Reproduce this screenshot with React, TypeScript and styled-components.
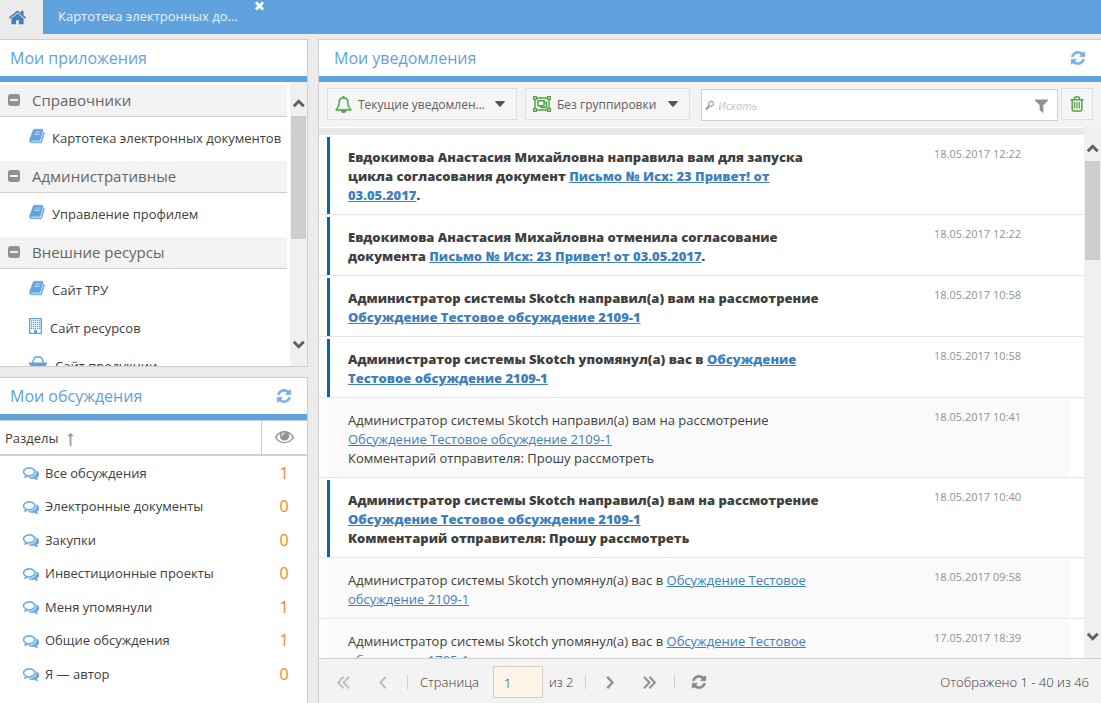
import React from "react";
import styled, { createGlobalStyle } from "styled-components";

const BLUE = "#5fa2dd";
const LINE = "#cfcfcf";
const GREEN = "#4fa344";

const GlobalStyle = createGlobalStyle`
  *, *::before, *::after { box-sizing: border-box; }
  body {
    margin: 0;
    background: #ebebeb;
    color: #404040;
    font: 13px/19px "Open Sans", "Noto Sans", sans-serif;
  }
  button, input { font: inherit; color: inherit; margin: 0; }
  button { background: none; border: 0; padding: 0; cursor: pointer; }
  svg { display: block; flex: none; }
`;

/* ---------- icons ---------- */

const PATHS = {
  home: "M1472 992v480q0 26-19 45t-45 19h-384v-384h-256v384h-384q-26 0-45-19t-19-45v-480q0-1 .5-3t.5-3l575-474 575 474q1 2 1 6zm223-69l-62 74q-8 9-21 11h-3q-13 0-21-7l-692-577-692 577q-12 8-24 7-13-2-21-11l-62-74q-8-10-7-23.5t11-21.5l719-599q32-26 76-26t76 26l244 204v-195q0-14 9-23t23-9h192q14 0 23 9t9 23v408l219 182q10 8 11 21.5t-7 23.5z",
  refresh:
    "M1639 1056q0 5-1 7-64 268-268 434.5t-478 166.5q-146 0-282.5-55t-243.5-157l-129 129q-19 19-45 19t-45-19-19-45v-448q0-26 19-45t45-19h448q26 0 45 19t19 45-19 45l-137 137q71 66 161 102t187 36q134 0 250-65t186-179q11-17 53-117 8-23 30-23h192q13 0 22.5 9.5t9.5 22.5zm25-800v448q0 26-19 45t-45 19h-448q-26 0-45-19t-19-45 19-45l138-138q-148-137-349-137-134 0-250 65t-186 179q-11 17-53 117-8 23-30 23h-199q-13 0-22.5-9.5t-9.5-22.5v-7q65-268 270-434.5t480-166.5q146 0 284 55.5t245 156.5l130-129q19-19 45-19t45 19 19 45z",
  eye: "M1664 960q-152-236-381-353 61 104 61 225 0 185-131.5 316.5t-316.5 131.5-316.5-131.5-131.5-316.5q0-121 61-225-229 117-381 353 133 205 333.5 326.5t434.5 121.5 434.5-121.5 333.5-326.5zm-720-384q0-20-14-34t-34-14q-125 0-214.5 89.5t-89.5 214.5q0 20 14 34t34 14 34-14 14-34q0-86 61-147t147-61q20 0 34-14t14-34zm848 384q0 34-20 69-140 230-376.5 368.5t-499.5 138.5-499.5-139-376.5-368q-20-35-20-69t20-69q140-229 376.5-368t499.5-139 499.5 139 376.5 368q20 35 20 69z",
  minus:
    "M1408 960v-128q0-26-19-45t-45-19h-896q-26 0-45 19t-19 45v128q0 26 19 45t45 19h896q26 0 45-19t19-45zm256-544v960q0 119-84.5 203.5t-203.5 84.5h-960q-119 0-203.5-84.5t-84.5-203.5v-960q0-119 84.5-203.5t203.5-84.5h960q119 0 203.5 84.5t84.5 203.5z",
  book: "M1703 478q40 57 18 129l-275 906q-19 64-76.5 107.5t-122.5 43.5h-923q-77 0-148.5-53.5t-99.5-131.5q-24-67-2-127 0-4 3-27t4-37q1-8-3-21.5t-3-19.5q2-11 8-21t16.5-23.5 16.5-23.5q23-38 45-91.5t30-91.5q3-10 .5-30t-.5-28q3-11 17-28t17-23q21-36 42-92t25-90q1-9-2.5-32t.5-28q4-13 22-30.5t22-22.5q19-26 42.5-84.5t27.5-96.5q1-8-3-25.5t-2-26.5q2-8 9-18t18-23 17-21q8-12 16.5-30.5t15-35 16-36 19.5-32 26.5-23.5 36-11.5 47.5 5.5l-1 3q38-9 51-9h761q74 0 114 56t18 130l-274 906q-36 119-71.5 153.5t-128.5 34.5h-869q-27 0-38 15-11 16-1 43 24 70 144 70h923q29 0 56-15.5t35-41.5l300-987q7-22 5-57 38 15 59 43zm-1064 2q-4 13 2 22.5t20 9.5h608q13 0 25.5-9.5t16.5-22.5l21-64q4-13-2-22.5t-20-9.5h-608q-13 0-25.5 9.5t-16.5 22.5zm-83 256q-4 13 2 22.5t20 9.5h608q13 0 25.5-9.5t16.5-22.5l21-64q4-13-2-22.5t-20-9.5h-608q-13 0-25.5 9.5t-16.5 22.5z",
  times:
    "M1490 1322q0 40-28 68l-136 136q-28 28-68 28t-68-28l-294-294-294 294q-28 28-68 28t-68-28l-136-136q-28-28-28-68t28-68l294-294-294-294q-28-28-28-68t28-68l136-136q28-28 68-28t68 28l294 294 294-294q28-28 68-28t68 28l136 136q28 28 28 68t-28 68l-294 294 294 294q28 28 28 68z",
  comments:
    "M704 384q-153 0-286 52t-211.5 141-78.5 191q0 82 53 158t149 132l97 56-35 84q34-20 62-39l44-31 53 10q78 14 153 14 153 0 286-52t211.5-141 78.5-191-78.5-191-211.5-141-286-52zm0-128q191 0 353.5 68.5t256.5 186.5 94 257-94 257-256.5 186.5-353.5 68.5q-86 0-176-16-124 88-278 128-36 9-86 16h-3q-11 0-20.5-8t-11.5-21q-1-3-1-6.5t.5-6.5 2-6l2.5-5 3.5-5.5 4-5 4.5-5 4-4.5q5-6 23-25t26-29.5 22.5-29 25-38.5 20.5-44q-124-72-195-177t-71-224q0-139 94-257t256.5-186.5 353.5-68.5zm822 1169q10 24 20.5 44t25 38.5 22.5 29 26 29.5 23 25q1 1 4 4.5t4.5 5 4 5 3.5 5.5l2.5 5 2 6 .5 6.5-1 6.5q-3 14-13 22t-22 7q-50-7-86-16-154-40-278-128-90 16-176 16-271 0-472-132 58 4 88 4 161 0 309-45t264-129q125-92 192-212t67-254q0-77-23-152 129 71 204 178t75 230q0 120-71 224.5t-195 176.5z",
  filter:
    "M1595 295q17 41-14 70l-493 493v742q0 42-39 59-13 5-25 5-27 0-45-19l-256-256q-19-19-19-45v-486l-493-493q-31-29-14-70 17-39 59-39h1280q42 0 59 39z",
  bell: "M912 1696q0-16-16-16-59 0-101.5-42.5t-42.5-101.5q0-16-16-16t-16 16q0 73 51.5 124.5t124.5 51.5q16 0 16-16zm-666-288h1300q-266-300-266-832 0-51-24-105t-69-103-121.5-80.5-169.5-31.5-169.5 31.5-121.5 80.5-69 103-24 105q0 532-266 832zm1482 0q0 52-38 90t-90 38h-448q0 106-75 181t-181 75-181-75-75-181h-448q-52 0-90-38t-38-90q50-42 91-88t85-119.5 74.5-158.5 50-206 19.5-260q0-152 117-282.5t307-158.5q-8-19-8-39 0-40 28-68t68-28 68 28 28 68q0 20-8 39 190 28 307 158.5t117 282.5q0 139 19.5 260t50 206 74.5 158.5 85 119.5 91 88z",
};

interface IconProps {
  name: keyof typeof PATHS;
  size: number;
  color: string;
  heavy?: boolean;
}

const Icon = ({ name, size, color, heavy }: IconProps) => (
  <svg width={size} height={size} viewBox="0 0 1792 1792" fill={color} aria-hidden="true">
    <path d={PATHS[name]} stroke={heavy ? color : "none"} strokeWidth="50" />
  </svg>
);

const BuildingIcon = () => (
  <svg width="14" height="18" viewBox="0 0 14 18" fill={BLUE} aria-hidden="true">
    <path d="M0 1h13v16H0zM1.300 2.300v13.400H5V13h3v2.700h3.700V2.300z" fillRule="evenodd" />
    {[3, 5, 7, 9, 11].map((y) =>
      [2, 4, 6, 8, 10].map((x) => <rect key={`${x}-${y}`} x={x} y={y} width="1.300" height="1.300" />)
    )}
    <rect x="5" y="14" width="3" height="3" />
  </svg>
);

const BasketIcon = () => (
  <svg width="19" height="18" viewBox="0 0 19 18" aria-hidden="true">
    <path d="M3.500 8L5.200 3.200Q5.600 2 6.800 2h4.400q1.200 0 1.600 1.200L14.500 8" fill="none" stroke={BLUE} strokeWidth="1.400" />
    <path d="M0 7.500h18v2h-1L16 16H2L1 9.500H0z" fill={BLUE} />
    <path d="M5.500 11v3M9 11v3M12.500 11v3" stroke="#fff" />
  </svg>
);

const GroupIcon = () => (
  <svg width="18" height="16" viewBox="0 0 18 16" fill="none" stroke={GREEN} aria-hidden="true">
    <path d="M2 2h14v12H2z" strokeWidth="1.400" fill="#e9f4e6" />
    <path d="M5 4.700h6v5H5z" strokeWidth="1.500" fill="#fff" />
    <path d="M11 6.500h2.500v5H8V9.700" strokeWidth="1.500" />
    <path
      d="M.6.600h2.800v2.800H.6zM14.600.600h2.800v2.800h-2.800zM.6 12.600h2.800v2.800H.6zM14.600 12.600h2.800v2.800h-2.800z"
      strokeWidth="1.200"
      fill="#dcefd8"
    />
  </svg>
);

const TrashIcon = () => (
  <svg width="14" height="16" viewBox="0 0 14 16" fill="none" stroke={GREEN} aria-hidden="true">
    <path d="M.5 3.700h13M4.500 3.500V2q0-1 1-1h3q1 0 1 1v1.500" strokeWidth="1.500" />
    <path d="M2.200 4v9.500q0 1.500 1.300 1.500h7q1.300 0 1.300-1.500V4" strokeWidth="1.500" />
    <path d="M4.700 6v6.500M7 6v6.500M9.300 6v6.500" strokeWidth="1.200" />
  </svg>
);

const SearchIcon = () => (
  <svg width="10" height="11" viewBox="0 0 10 11" aria-hidden="true">
    <path d="M4.500 6L.8 9.400" stroke="#888" strokeWidth="1.800" />
    <circle cx="6" cy="3.800" r="2.700" fill="#dfeaf4" stroke="#9a9fa5" />
  </svg>
);

const CaretIcon = () => (
  <svg width="10" height="6" viewBox="0 0 10 6" fill="#555" aria-hidden="true">
    <path d="M.2 0h9.600Q10 .8 9.400 1.300L5.700 5.500Q5 6.100 4.300 5.500L.6 1.300Q0 .8.2 0z" />
  </svg>
);

const SortIcon = () => (
  <svg width="7" height="14" viewBox="0 0 7 14" fill="#999" stroke="#999" aria-hidden="true">
    <path d="M3.500 14V3" strokeWidth="1.800" />
    <path d="M.8 4L3.500 1l2.700 3z" strokeWidth=".6" />
  </svg>
);

const ScrollArrow = ({ up }: { up?: boolean }) => (
  <svg width="12" height="9" viewBox="0 0 12 9" fill="none" stroke="#606060" strokeWidth="3" aria-hidden="true">
    <path d={up ? "M.7 7.300L5.700 2.300l5 5" : "M.7 1.700L5.700 6.700l5-5"} />
  </svg>
);

const PageArrow = ({ right, twice }: { right?: boolean; twice?: boolean }) => (
  <svg
    width={twice ? 13 : 8}
    height="13"
    viewBox={twice ? "0 0 13 13" : "0 0 8 13"}
    fill="none"
    stroke={right ? "#929292" : "#c0c0c0"}
    strokeWidth={right && !twice ? "2.500" : "2"}
    aria-hidden="true"
  >
    {right ? (
      <path d={twice ? "M1 .8l5.400 5.700L1 12.200M6.400.8l5.400 5.700-5.400 5.700" : "M1.200.8l5.400 5.700-5.400 5.700"} />
    ) : (
      <path d={twice ? "M12 .8L6.600 6.500l5.400 5.700M6.600.8L1.200 6.500l5.400 5.700" : "M6.800.8L1.400 6.500l5.400 5.700"} />
    )}
  </svg>
);

/* ---------- frame ---------- */

const Page = styled.div`
  display: flex;
  flex-direction: column;
  height: 100vh;
`;

const TabBar = styled.nav`
  display: flex;
  height: 34px;
  flex: none;
  background: ${BLUE};
`;

const HomeButton = styled.button`
  width: 43px;
  padding-left: 8px;
  background: #ebebeb;
`;

const Tab = styled.div`
  display: flex;
  align-items: flex-start;
  gap: 15px;
  padding: 0 15px;
  color: #e9f2fb;
`;

const TabLabel = styled.button`
  height: 33px;
`;

const CloseButton = styled.button`
  margin-top: -1px;
`;

const Workspace = styled.main`
  display: flex;
  flex: 1;
  min-height: 0;
  gap: 10px;
  padding-top: 5px;
`;

const Sidebar = styled.div`
  display: flex;
  flex-direction: column;
  gap: 10px;
  width: 308px;
  flex: none;
`;

const Panel = styled.section<{ $side: "left" | "right"; $grow?: boolean; $closed?: boolean }>`
  display: flex;
  flex-direction: column;
  min-width: 0;
  min-height: 0;
  flex: ${(p) => (p.$grow ? "1" : "none")};
  background: #fff;
  border-top: 1px solid ${LINE};
  border-${(p) => (p.$side === "left" ? "right" : "left")}: 1px solid ${LINE};
  border-bottom: ${(p) => (p.$closed ? `1px solid ${LINE}` : "0")};
`;

const PanelHeader = styled.header<{ $indent: number }>`
  display: flex;
  align-items: center;
  justify-content: space-between;
  flex: none;
  height: 42px;
  padding: 0 15px 0 ${(p) => p.$indent}px;
  border-bottom: 6px solid ${BLUE};
`;

const PanelTitle = styled.h2`
  margin: 0;
  font-size: 16px;
  font-weight: 400;
  line-height: 22px;
  color: ${BLUE};
`;

const ScrollArea = styled.div`
  display: flex;
  flex: 1;
  min-height: 0;
`;

const ScrollTrack = styled.div`
  display: flex;
  flex-direction: column;
  align-items: center;
  width: 17px;
  flex: none;
  padding: 17px 0;
  background: #f0f0f0;
`;

const ScrollThumb = styled.div<{ $length: number }>`
  width: 15px;
  height: ${(p) => p.$length}px;
  margin: 8px 0 auto;
  background: #cdcdcd;
`;

const Scrollbar = ({ length }: { length: number }) => (
  <ScrollTrack aria-hidden="true">
    <ScrollArrow up />
    <ScrollThumb $length={length} />
    <ScrollArrow />
  </ScrollTrack>
);

/* ---------- applications ---------- */

const AppList = styled.div`
  flex: 1;
  min-width: 0;
  overflow: hidden;
  padding: 3px 3px 0 0;
`;

const AppGroup = styled.div`
  margin-bottom: 6px;
`;

const GroupToggle = styled.button`
  display: flex;
  align-items: center;
  gap: 11px;
  width: 100%;
  height: 32px;
  padding: 0 0 2px 7px;
  background: #f3f3f3;
  border-bottom: 1px solid ${LINE};
  font-size: 15px;
  line-height: 20px;
  color: #666;
`;

const AppLink = styled.a`
  display: flex;
  align-items: center;
  gap: 7px;
  height: 38px;
  padding: 4px 0 0 29px;
  white-space: nowrap;
  color: #404040;
  text-decoration: none;

  svg {
    margin-bottom: 4px;
  }
`;

const appGroups = [
  { title: "Справочники", items: [{ label: "Картотека электронных документов", icon: "book" }] },
  { title: "Административные", items: [{ label: "Управление профилем", icon: "book" }] },
  {
    title: "Внешние ресурсы",
    items: [
      { label: "Сайт ТРУ", icon: "book" },
      { label: "Сайт ресурсов", icon: "building" },
      { label: "Сайт продукции", icon: "basket" },
    ],
  },
];

const AppIcon = ({ icon }: { icon: string }) => {
  if (icon === "building") return <BuildingIcon />;
  if (icon === "basket") return <BasketIcon />;
  return <Icon name="book" size={16} color={BLUE} heavy />;
};

/* ---------- discussions ---------- */

const Discussions = styled.table`
  width: 100%;
  margin-bottom: 12px;
  border-collapse: separate;
  border-spacing: 0;

  th {
    height: 36px;
    padding: 2px 0 0 5px;
    border-top: 1px solid ${LINE};
    border-bottom: 2px solid ${LINE};
    font-weight: 400;
    text-align: left;
  }
  th + th {
    width: 46px;
    padding: 0 0 2px 13px;
    border-left: 1px solid ${LINE};
  }
  td {
    height: 34px;
    padding: 0 0 0 23px;
  }
  tr:nth-child(even) td {
    height: 33px;
  }
`;

const SortButton = styled.button`
  display: flex;
  align-items: center;
  gap: 8px;
`;

const Topic = styled.a`
  display: flex;
  align-items: center;
  gap: 6px;
  color: #404040;
  text-decoration: none;
`;

const Count = styled.td`
  && {
    padding: 0;
    text-align: center;
    font-size: 16px;
    color: #f08a24;
  }
`;

const topics: [string, number][] = [
  ["Все обсуждения", 1],
  ["Электронные документы", 0],
  ["Закупки", 0],
  ["Инвестиционные проекты", 0],
  ["Меня упомянули", 1],
  ["Общие обсуждения", 1],
  ["Я — автор", 0],
];

/* ---------- notifications ---------- */

const Toolbar = styled.div`
  display: flex;
  align-items: flex-start;
  flex: none;
  height: 45px;
  padding: 6px 8px 0;
  background: #f3f3f3;
`;

const ToolButton = styled.button<{ $width: number; $after: number }>`
  display: flex;
  align-items: center;
  gap: 6px;
  flex: none;
  width: ${(p) => p.$width}px;
  height: 32px;
  margin-right: ${(p) => p.$after}px;
  padding: 0 11px 0 7px;
  border: 1px solid #e1e1e1;
  background: #f5f5f5;
  font-size: 12px;
  color: #606060;
  white-space: nowrap;

  svg:last-child {
    margin-left: auto;
  }
`;

const TrashButton = styled.button`
  display: grid;
  place-items: center;
  flex: none;
  width: 32px;
  height: 32px;
  border: 1px solid #e1e1e1;
  background: #f5f5f5;
`;

const SearchBox = styled.label`
  display: flex;
  align-items: center;
  gap: 3px;
  flex: 1;
  min-width: 0;
  height: 32px;
  margin: 1px 3px 0 0;
  padding: 0 7px 0 3px;
  border: 1px solid ${LINE};
  background: #fff;
`;

const SearchInput = styled.input`
  flex: 1;
  min-width: 0;
  padding: 0;
  border: 0;
  outline: 0;
  background: none;
  font-size: 11px;

  &::placeholder {
    color: #c4c4c4;
    font-style: italic;
    opacity: 1;
  }
`;

const Feed = styled.div`
  flex: 1;
  min-width: 0;
  overflow: hidden;
  border-top: 1px solid #fff;

  &::before {
    content: "";
    display: block;
    height: 7px;
    background: #e8e8e8;
  }
`;

const Notice = styled.article`
  padding: 2px 14px 0 8px;
  border-bottom: 1px solid #e6e6e6;
`;

const NoticeBody = styled.div<{ $unread: boolean }>`
  display: grid;
  grid-template-columns: minmax(0, 1fr) 88px;
  column-gap: 104px;
  padding: 11px 48px 9px 18px;
  border-left: 3px solid ${(p) => (p.$unread ? "#0067b0" : "#fafafa")};
  background: ${(p) => (p.$unread ? "#fff" : "#fafafa")};
  font-weight: ${(p) => (p.$unread ? 800 : 400)};

  p {
    margin: 0;
  }
  a {
    color: #3e80bd;
  }
`;

const Stamp = styled.time`
  margin-top: -4px;
  font-size: 11px;
  font-weight: 400;
  color: #929292;
  white-space: nowrap;
`;

const SKOTCH = "Администратор системы Skotch";
const TALK = "Обсуждение Тестовое обсуждение 2109-1";
const COMMENT = "Комментарий отправителя: Прошу рассмотреть";

const notices = [
  {
    unread: true,
    text: "Евдокимова Анастасия Михайловна направила вам для запуска цикла согласования документ",
    link: "Письмо № Исх: 23 Привет! от 03.05.2017",
    end: ".",
    time: "18.05.2017 12:22",
  },
  {
    unread: true,
    text: "Евдокимова Анастасия Михайловна отменила согласование документа",
    link: "Письмо № Исх: 23 Привет! от 03.05.2017",
    end: ".",
    time: "18.05.2017 12:22",
  },
  { unread: true, text: `${SKOTCH} направил(а) вам на рассмотрение`, link: TALK, time: "18.05.2017 10:58" },
  { unread: true, text: `${SKOTCH} упомянул(а) вас в`, link: TALK, time: "18.05.2017 10:58" },
  { unread: false, text: `${SKOTCH} направил(а) вам на рассмотрение`, link: TALK, note: COMMENT, time: "18.05.2017 10:41" },
  { unread: true, text: `${SKOTCH} направил(а) вам на рассмотрение`, link: TALK, note: COMMENT, time: "18.05.2017 10:40" },
  { unread: false, text: `${SKOTCH} упомянул(а) вас в`, link: TALK, time: "18.05.2017 09:58" },
  {
    unread: false,
    text: `${SKOTCH} упомянул(а) вас в`,
    link: "Обсуждение Тестовое обсуждение 1705-1",
    time: "17.05.2017 18:39",
  },
];

/* ---------- pager ---------- */

const Pager = styled.footer`
  display: flex;
  align-items: center;
  flex: none;
  height: 45px;
  padding: 2px 12px 0 18px;
  border-top: 1px solid ${LINE};
  background: #f3f3f3;
  font-weight: 300;
  color: #333;
`;

const PagerButtons = styled.div<{ $gap: number }>`
  display: flex;
  align-items: center;
  gap: ${(p) => p.$gap}px;
`;

const Divider = styled.span<{ $before: number; $after: number }>`
  width: 1px;
  height: 14px;
  margin: 0 ${(p) => p.$after}px 0 ${(p) => p.$before}px;
  background: ${LINE};
`;

const PageField = styled.label`
  display: flex;
  align-items: center;
  gap: 14px;
`;

const PageInput = styled.input`
  width: 50px;
  height: 32px;
  padding: 2px 10px 0;
  border: 1px solid ${LINE};
  background: #fff5e6;
`;

const PageTotal = styled.span`
  margin-left: 6px;
`;

const Summary = styled.span`
  margin-left: auto;
`;

export default function App() {
  return (
    <Page>
      <GlobalStyle />
      <TabBar>
        <HomeButton aria-label="Главная">
          <Icon name="home" size={19} color="#4680b5" />
        </HomeButton>
        <Tab>
          <TabLabel>Картотека электронных до...</TabLabel>
          <CloseButton aria-label="Закрыть">
            <Icon name="times" size={13} color="#fff" />
          </CloseButton>
        </Tab>
      </TabBar>

      <Workspace>
        <Sidebar>
          <Panel $side="left" $grow $closed>
            <PanelHeader $indent={10}>
              <PanelTitle>Мои приложения</PanelTitle>
            </PanelHeader>
            <ScrollArea>
              <AppList>
                {appGroups.map((group) => (
                  <AppGroup key={group.title}>
                    <GroupToggle aria-expanded="true">
                      <Icon name="minus" size={14} color="#929292" />
                      {group.title}
                    </GroupToggle>
                    {group.items.map((item) => (
                      <AppLink key={item.label} href="#">
                        <AppIcon icon={item.icon} />
                        {item.label}
                      </AppLink>
                    ))}
                  </AppGroup>
                ))}
              </AppList>
              <Scrollbar length={123} />
            </ScrollArea>
          </Panel>

          <Panel $side="left">
            <PanelHeader $indent={10}>
              <PanelTitle>Мои обсуждения</PanelTitle>
              <button aria-label="Обновить обсуждения">
                <Icon name="refresh" size={16} color="#75b0e6" heavy />
              </button>
            </PanelHeader>
            <Discussions>
              <thead>
                <tr>
                  <th scope="col">
                    <SortButton>
                      Разделы
                      <SortIcon />
                    </SortButton>
                  </th>
                  <th scope="col" aria-label="Непрочитанные">
                    <Icon name="eye" size={19} color="#929292" />
                  </th>
                </tr>
              </thead>
              <tbody>
                {topics.map(([label, count]) => (
                  <tr key={label}>
                    <td>
                      <Topic href="#">
                        <Icon name="comments" size={16} color="#66a6e0" heavy />
                        {label}
                      </Topic>
                    </td>
                    <Count>{count}</Count>
                  </tr>
                ))}
              </tbody>
            </Discussions>
          </Panel>
        </Sidebar>

        <Panel $side="right" $grow>
          <PanelHeader $indent={15}>
            <PanelTitle>Мои уведомления</PanelTitle>
            <button aria-label="Обновить уведомления">
              <Icon name="refresh" size={16} color="#75b0e6" heavy />
            </button>
          </PanelHeader>
          <Toolbar>
            <ToolButton $width={190} $after={8}>
              <Icon name="bell" size={17} color={GREEN} heavy />
              Текущие уведомлен...
              <CaretIcon />
            </ToolButton>
            <ToolButton $width={165} $after={11}>
              <GroupIcon />
              Без группировки
              <CaretIcon />
            </ToolButton>
            <SearchBox>
              <SearchIcon />
              <SearchInput type="text" placeholder="Искать" aria-label="Искать" />
              <Icon name="filter" size={17} color="#929292" />
            </SearchBox>
            <TrashButton aria-label="Удалить">
              <TrashIcon />
            </TrashButton>
          </Toolbar>
          <ScrollArea>
            <Feed>
              {notices.map((n, i) => (
                <Notice key={i}>
                  <NoticeBody $unread={n.unread}>
                    <div>
                      <p>
                        {n.text} <a href="#">{n.link}</a>
                        {n.end}
                      </p>
                      {n.note && <p>{n.note}</p>}
                    </div>
                    <Stamp>{n.time}</Stamp>
                  </NoticeBody>
                </Notice>
              ))}
            </Feed>
            <Scrollbar length={99} />
          </ScrollArea>
          <Pager>
            <PagerButtons $gap={29}>
              <button aria-label="Первая страница">
                <PageArrow twice />
              </button>
              <button aria-label="Предыдущая страница">
                <PageArrow />
              </button>
            </PagerButtons>
            <Divider $before={20} $after={12} />
            <PageField>
              Страница
              <PageInput type="text" defaultValue="1" />
            </PageField>
            <PageTotal>из 2</PageTotal>
            <Divider $before={12} $after={20} />
            <PagerButtons $gap={29}>
              <button aria-label="Следующая страница">
                <PageArrow right />
              </button>
              <button aria-label="Последняя страница">
                <PageArrow right twice />
              </button>
            </PagerButtons>
            <Divider $before={18} $after={16} />
            <button aria-label="Обновить">
              <Icon name="refresh" size={16} color="#888" heavy />
            </button>
            <Summary>Отображено 1 - 40 из 46</Summary>
          </Pager>
        </Panel>
      </Workspace>
    </Page>
  );
}
